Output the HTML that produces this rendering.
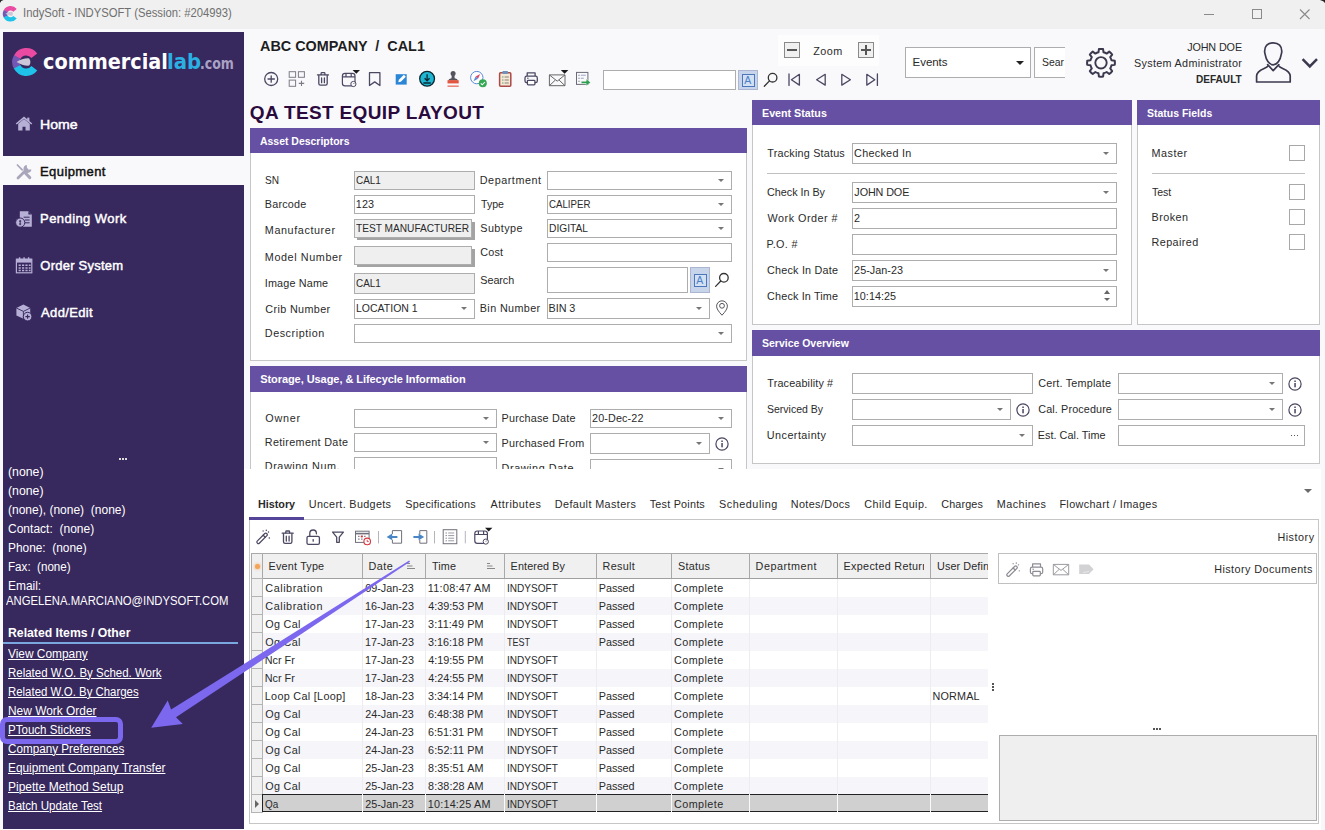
<!DOCTYPE html>
<html lang="en"><head><meta charset="utf-8"><title>IndySoft - INDYSOFT</title>
<style>
html,body{margin:0;padding:0}
body{width:1325px;height:830px;overflow:hidden;background:#f9f9fc;position:relative;font-family:'Liberation Sans',sans-serif}
.a{position:absolute}
.arr{width:0;height:0;border-style:solid;border-width:3.6px 3.7px 0;border-color:transparent}

.t{position:absolute;white-space:pre;line-height:1;transform-origin:0 0;font-family:'Liberation Sans',sans-serif;color:#2a2a2a}
</style></head>
<body>
<span class="t" style="left:259.90px;top:38px;font-size:15.5px;font-weight:700;color:#1e1e1e;transform:scaleX(0.928);">ABC COMPANY  /  CAL1</span>
<span class="t" style="left:249.85px;top:103px;font-size:19px;font-weight:700;color:#2b0a3d;letter-spacing:0.35px;">QA TEST EQUIP LAYOUT</span>
<div class="a" style="left:603px;top:70px;width:133px;height:20px;background:#fff;border:1px solid #adadad;box-sizing:border-box;"></div>
<div class="a" style="left:778px;top:35px;width:101px;height:31px;background:#fdfdfe;"></div>
<div class="a" style="left:784px;top:42px;width:16px;height:16px;background:#f0f0f0;border:1px solid #8a8a8a;box-sizing:border-box;"></div>
<div class="a" style="left:858px;top:42px;width:16px;height:16px;background:#f0f0f0;border:1px solid #8a8a8a;box-sizing:border-box;"></div>
<div class="a" style="left:787px;top:49px;width:10px;height:2px;background:#555;"></div>
<div class="a" style="left:861px;top:49px;width:10px;height:2px;background:#555;"></div>
<div class="a" style="left:865px;top:45px;width:2px;height:10px;background:#555;"></div>
<span class="t" style="left:813.35px;top:46px;font-size:10.8px;letter-spacing:0.42px;">Zoom</span>
<div class="a" style="left:905px;top:47px;width:126px;height:31px;background:#fff;border:1px solid #adadad;box-sizing:border-box;"></div>
<span class="t" style="left:912.60px;top:57px;font-size:11.5px;letter-spacing:-0.06px;">Events</span>
<div class="a arr" style="left:1016px;top:61px;border-width:4.5px 4px 0;border-top-color:#222"></div>
<div class="a" style="left:1034px;top:47px;width:31px;height:31px;overflow:hidden"><div style="width:60px;height:31px;box-sizing:border-box;border:1px solid #adadad;background:#fff"></div></div>
<span class="t" style="left:1042.10px;top:57px;font-size:11.5px;transform:scaleX(0.905);">Sear</span>
<span class="t" style="left:1187.15px;top:42px;font-size:10.8px;letter-spacing:-0.12px;">JOHN DOE</span>
<span class="t" style="left:1134.10px;top:58px;font-size:10.8px;letter-spacing:0.30px;">System Administrator</span>
<span class="t" style="left:1195.85px;top:74px;font-size:10.8px;font-weight:700;transform:scaleX(0.933);">DEFAULT</span>
<div class="a" style="left:250px;top:128px;width:497px;height:233px;background:#fff;border:1px solid #c6c6c6;box-sizing:border-box;"></div>
<div class="a" style="left:250px;top:128px;width:497px;height:25px;background:#6650a3;"></div>
<span class="t" style="left:260.15px;top:136px;font-size:11px;font-weight:700;color:#fff;transform:scaleX(0.950);">Asset Descriptors</span>
<span class="t" style="left:265.30px;top:175px;font-size:10.8px;transform:scaleX(0.936);">SN</span>
<span class="t" style="left:264.80px;top:199px;font-size:10.8px;letter-spacing:0.19px;">Barcode</span>
<span class="t" style="left:264.80px;top:225px;font-size:10.8px;letter-spacing:0.60px;">Manufacturer</span>
<span class="t" style="left:264.80px;top:252px;font-size:10.8px;letter-spacing:0.60px;">Model Number</span>
<span class="t" style="left:264.80px;top:278px;font-size:10.8px;letter-spacing:0.16px;">Image Name</span>
<span class="t" style="left:265.30px;top:304px;font-size:10.8px;letter-spacing:0.36px;">Crib Number</span>
<span class="t" style="left:264.80px;top:328px;font-size:10.8px;letter-spacing:0.54px;">Description</span>
<span class="t" style="left:479.80px;top:175px;font-size:10.8px;letter-spacing:0.53px;">Department</span>
<span class="t" style="left:480.55px;top:199px;font-size:10.8px;transform:scaleX(0.980);">Type</span>
<span class="t" style="left:480.30px;top:223px;font-size:10.8px;letter-spacing:0.43px;">Subtype</span>
<span class="t" style="left:480.30px;top:247px;font-size:10.8px;letter-spacing:0.18px;">Cost</span>
<span class="t" style="left:480.30px;top:275px;font-size:10.8px;letter-spacing:-0.06px;">Search</span>
<span class="t" style="left:479.80px;top:303px;font-size:10.8px;letter-spacing:0.37px;">Bin Number</span>
<div class="a" style="left:354px;top:171px;width:121px;height:19px;background:#efefef;border:1px solid #adadad;box-sizing:border-box;"></div>
<span class="t" style="left:356.10px;top:175px;font-size:10.8px;transform:scaleX(0.918);">CAL1</span>
<div class="a" style="left:354px;top:195px;width:121px;height:19px;background:#fff;border:1px solid #adadad;box-sizing:border-box;"></div>
<span class="t" style="left:355.85px;top:199px;font-size:10.8px;letter-spacing:0.12px;">123</span>
<div class="a" style="left:357px;top:222px;width:118px;height:18px;background:#a3a3a3;"></div>
<div class="a" style="left:354px;top:219px;width:118px;height:19px;background:#efefef;border:1px solid #adadad;box-sizing:border-box;"></div>
<span class="t" style="left:356.35px;top:223px;font-size:10.8px;transform:scaleX(0.939);">TEST MANUFACTURER</span>
<div class="a" style="left:357px;top:249px;width:118px;height:18px;background:#a3a3a3;"></div>
<div class="a" style="left:354px;top:246px;width:118px;height:19px;background:#efefef;border:1px solid #adadad;box-sizing:border-box;"></div>
<div class="a" style="left:354px;top:273px;width:121px;height:21px;background:#efefef;border:1px solid #adadad;box-sizing:border-box;"></div>
<span class="t" style="left:356.10px;top:278px;font-size:10.8px;transform:scaleX(0.918);">CAL1</span>
<div class="a" style="left:354px;top:299px;width:121px;height:20px;background:#fff;border:1px solid #adadad;box-sizing:border-box;"></div>
<div class="a arr" style="left:461.3px;top:307.2px;border-top-color:#767676"></div>
<span class="t" style="left:355.85px;top:303px;font-size:10.8px;transform:scaleX(0.972);">LOCATION 1</span>
<div class="a" style="left:354px;top:324px;width:378px;height:19px;background:#fff;border:1px solid #adadad;box-sizing:border-box;"></div>
<div class="a arr" style="left:718.3px;top:331.7px;border-top-color:#767676"></div>
<div class="a" style="left:547px;top:171px;width:185px;height:19px;background:#fff;border:1px solid #adadad;box-sizing:border-box;"></div>
<div class="a arr" style="left:718.3px;top:178.7px;border-top-color:#767676"></div>
<div class="a" style="left:547px;top:195px;width:185px;height:19px;background:#fff;border:1px solid #adadad;box-sizing:border-box;"></div>
<div class="a arr" style="left:718.3px;top:202.7px;border-top-color:#767676"></div>
<span class="t" style="left:549.10px;top:199px;font-size:10.8px;transform:scaleX(0.897);">CALIPER</span>
<div class="a" style="left:547px;top:219px;width:185px;height:19px;background:#fff;border:1px solid #adadad;box-sizing:border-box;"></div>
<div class="a arr" style="left:718.3px;top:226.7px;border-top-color:#767676"></div>
<span class="t" style="left:548.85px;top:223px;font-size:10.8px;transform:scaleX(0.947);">DIGITAL</span>
<div class="a" style="left:547px;top:243px;width:185px;height:19px;background:#fff;border:1px solid #adadad;box-sizing:border-box;"></div>
<div class="a" style="left:547px;top:267px;width:141px;height:26px;background:#fff;border:1px solid #adadad;box-sizing:border-box;"></div>
<div class="a" style="left:547px;top:298px;width:163px;height:21px;background:#fff;border:1px solid #adadad;box-sizing:border-box;"></div>
<div class="a arr" style="left:696.3px;top:306.7px;border-top-color:#767676"></div>
<span class="t" style="left:548.60px;top:303px;font-size:10.8px;letter-spacing:-0.06px;">BIN 3</span>
<div class="a" style="left:250px;top:366px;width:497px;height:103px;overflow:hidden">
<div class="a" style="left:-250px;top:-366px;width:1000px;height:600px">
<div class="a" style="left:250px;top:366px;width:497px;height:154px;background:#fff;border:1px solid #c6c6c6;box-sizing:border-box;"></div>
<div class="a" style="left:250px;top:366px;width:497px;height:26px;background:#6650a3;"></div>
<span class="t" style="left:260.15px;top:374px;font-size:11px;font-weight:700;color:#fff;letter-spacing:-0.06px;">Storage, Usage, &amp; Lifecycle Information</span>
<span class="t" style="left:265.30px;top:413px;font-size:10.8px;letter-spacing:0.76px;">Owner</span>
<span class="t" style="left:264.80px;top:437px;font-size:10.8px;letter-spacing:0.33px;">Retirement Date</span>
<span class="t" style="left:264.80px;top:461px;font-size:10.8px;letter-spacing:0.58px;">Drawing Num.</span>
<span class="t" style="left:501.60px;top:413px;font-size:10.8px;letter-spacing:0.20px;">Purchase Date</span>
<span class="t" style="left:501.60px;top:438px;font-size:10.8px;letter-spacing:0.21px;">Purchased From</span>
<span class="t" style="left:501.60px;top:463px;font-size:10.8px;letter-spacing:0.58px;">Drawing Date</span>
<div class="a" style="left:354px;top:409px;width:143px;height:19px;background:#fff;border:1px solid #adadad;box-sizing:border-box;"></div>
<div class="a arr" style="left:483.3px;top:416.7px;border-top-color:#767676"></div>
<div class="a" style="left:354px;top:433px;width:143px;height:19px;background:#fff;border:1px solid #adadad;box-sizing:border-box;"></div>
<div class="a arr" style="left:483.3px;top:440.7px;border-top-color:#767676"></div>
<div class="a" style="left:354px;top:457px;width:143px;height:19px;background:#fff;border:1px solid #adadad;box-sizing:border-box;"></div>
<div class="a" style="left:590px;top:409px;width:142px;height:19px;background:#fff;border:1px solid #adadad;box-sizing:border-box;"></div>
<div class="a arr" style="left:718.3px;top:416.7px;border-top-color:#767676"></div>
<span class="t" style="left:592.10px;top:413px;font-size:10.8px;letter-spacing:0.12px;">20-Dec-22</span>
<div class="a" style="left:590px;top:433px;width:120px;height:21px;background:#fff;border:1px solid #adadad;box-sizing:border-box;"></div>
<div class="a arr" style="left:696.3px;top:441.7px;border-top-color:#767676"></div>
<div class="a" style="left:590px;top:459px;width:142px;height:21px;background:#fff;border:1px solid #adadad;box-sizing:border-box;"></div>
<div class="a arr" style="left:718.3px;top:467.7px;border-top-color:#767676"></div>
<svg class="a" style="left:714px;top:435.5px" width="16" height="16" viewBox="0 0 16 16"><circle cx="8" cy="8" r="6.1" fill="none" stroke="#4a4560" stroke-width="1.2"/><rect x="7.3" y="7" width="1.5" height="4.3" fill="#4a4560"/><rect x="7.3" y="4.5" width="1.5" height="1.5" fill="#4a4560"/></svg>
</div></div>
<div class="a" style="left:752px;top:100px;width:380px;height:225px;background:#fff;border:1px solid #c6c6c6;box-sizing:border-box;"></div>
<div class="a" style="left:752px;top:100px;width:380px;height:25px;background:#6650a3;"></div>
<span class="t" style="left:761.65px;top:108px;font-size:11px;font-weight:700;color:#fff;transform:scaleX(0.973);">Event Status</span>
<span class="t" style="left:767.35px;top:148px;font-size:10.8px;letter-spacing:0.20px;">Tracking Status</span>
<span class="t" style="left:767.10px;top:187px;font-size:10.8px;letter-spacing:-0.03px;">Check In By</span>
<span class="t" style="left:767.60px;top:213px;font-size:10.8px;letter-spacing:0.49px;">Work Order #</span>
<span class="t" style="left:766.60px;top:239px;font-size:10.8px;letter-spacing:0.32px;">P.O. #</span>
<span class="t" style="left:767.10px;top:265px;font-size:10.8px;letter-spacing:0.20px;">Check In Date</span>
<span class="t" style="left:767.10px;top:291px;font-size:10.8px;letter-spacing:0.16px;">Check In Time</span>
<div class="a" style="left:852px;top:143px;width:265px;height:21px;background:#fff;border:1px solid #adadad;box-sizing:border-box;"></div>
<div class="a arr" style="left:1103.3px;top:151.7px;border-top-color:#767676"></div>
<span class="t" style="left:854.10px;top:148px;font-size:10.8px;letter-spacing:0.28px;">Checked In</span>
<div class="a" style="left:767px;top:173px;width:350px;height:1px;background:#c0c0c0;"></div>
<div class="a" style="left:852px;top:182px;width:265px;height:21px;background:#fff;border:1px solid #adadad;box-sizing:border-box;"></div>
<div class="a arr" style="left:1103.3px;top:190.7px;border-top-color:#767676"></div>
<span class="t" style="left:854.35px;top:187px;font-size:10.8px;letter-spacing:-0.11px;">JOHN DOE</span>
<div class="a" style="left:852px;top:208px;width:265px;height:21px;background:#fff;border:1px solid #adadad;box-sizing:border-box;"></div>
<span class="t" style="left:854.10px;top:213px;font-size:10.8px;">2</span>
<div class="a" style="left:852px;top:234px;width:265px;height:21px;background:#fff;border:1px solid #adadad;box-sizing:border-box;"></div>
<div class="a" style="left:852px;top:260px;width:265px;height:21px;background:#fff;border:1px solid #adadad;box-sizing:border-box;"></div>
<div class="a arr" style="left:1103.3px;top:268.7px;border-top-color:#767676"></div>
<span class="t" style="left:854.10px;top:265px;font-size:10.8px;letter-spacing:0.03px;">25-Jan-23</span>
<div class="a" style="left:852px;top:286px;width:265px;height:21px;background:#fff;border:1px solid #adadad;box-sizing:border-box;"></div>
<span class="t" style="left:853.85px;top:291px;font-size:10.8px;letter-spacing:0.01px;">10:14:25</span>
<div class="a arr" style="left:1103.5px;top:290px;border-width:0 3.5px 4px;border-top-color:transparent;border-bottom-color:#666"></div>
<div class="a arr" style="left:1103.5px;top:298px;border-top-color:#666"></div>
<div class="a" style="left:1137px;top:100px;width:183px;height:225px;background:#fff;border:1px solid #c6c6c6;box-sizing:border-box;"></div>
<div class="a" style="left:1137px;top:100px;width:183px;height:25px;background:#6650a3;"></div>
<span class="t" style="left:1147.15px;top:108px;font-size:11px;font-weight:700;color:#fff;transform:scaleX(0.953);">Status Fields</span>
<span class="t" style="left:1151.60px;top:148px;font-size:10.8px;letter-spacing:0.50px;">Master</span>
<div class="a" style="left:1289px;top:145px;width:16px;height:16px;background:#fff;border:1px solid #a8a8a8;box-sizing:border-box;"></div>
<span class="t" style="left:1152.35px;top:187px;font-size:10.8px;transform:scaleX(0.974);">Test</span>
<div class="a" style="left:1289px;top:184px;width:16px;height:16px;background:#fff;border:1px solid #a8a8a8;box-sizing:border-box;"></div>
<span class="t" style="left:1151.60px;top:212px;font-size:10.8px;letter-spacing:0.44px;">Broken</span>
<div class="a" style="left:1289px;top:209px;width:16px;height:16px;background:#fff;border:1px solid #a8a8a8;box-sizing:border-box;"></div>
<span class="t" style="left:1151.60px;top:237px;font-size:10.8px;letter-spacing:0.39px;">Repaired</span>
<div class="a" style="left:1289px;top:234px;width:16px;height:16px;background:#fff;border:1px solid #a8a8a8;box-sizing:border-box;"></div>
<div class="a" style="left:1152px;top:173px;width:153px;height:1px;background:#c0c0c0;"></div>
<div class="a" style="left:752px;top:330px;width:568px;height:134px;background:#fff;border:1px solid #c6c6c6;box-sizing:border-box;"></div>
<div class="a" style="left:752px;top:330px;width:568px;height:26px;background:#6650a3;"></div>
<span class="t" style="left:762.15px;top:338px;font-size:11px;font-weight:700;color:#fff;transform:scaleX(0.953);">Service Overview</span>
<span class="t" style="left:767.35px;top:378px;font-size:10.8px;letter-spacing:0.15px;">Traceability #</span>
<span class="t" style="left:767.10px;top:404px;font-size:10.8px;transform:scaleX(0.973);">Serviced By</span>
<span class="t" style="left:766.85px;top:430px;font-size:10.8px;letter-spacing:0.45px;">Uncertainty</span>
<span class="t" style="left:1038.30px;top:378px;font-size:10.8px;letter-spacing:0.21px;">Cert. Template</span>
<span class="t" style="left:1038.30px;top:404px;font-size:10.8px;letter-spacing:0.12px;">Cal. Procedure</span>
<span class="t" style="left:1037.80px;top:430px;font-size:10.8px;letter-spacing:0.04px;">Est. Cal. Time</span>
<div class="a" style="left:852px;top:373px;width:181px;height:21px;background:#fff;border:1px solid #adadad;box-sizing:border-box;"></div>
<div class="a" style="left:852px;top:399px;width:159px;height:21px;background:#fff;border:1px solid #adadad;box-sizing:border-box;"></div>
<div class="a arr" style="left:997.3px;top:407.7px;border-top-color:#767676"></div>
<div class="a" style="left:852px;top:425px;width:181px;height:21px;background:#fff;border:1px solid #adadad;box-sizing:border-box;"></div>
<div class="a arr" style="left:1019.3px;top:433.7px;border-top-color:#767676"></div>
<div class="a" style="left:1118px;top:373px;width:165px;height:21px;background:#fff;border:1px solid #adadad;box-sizing:border-box;"></div>
<div class="a arr" style="left:1269.3px;top:381.7px;border-top-color:#767676"></div>
<div class="a" style="left:1118px;top:399px;width:165px;height:21px;background:#fff;border:1px solid #adadad;box-sizing:border-box;"></div>
<div class="a arr" style="left:1269.3px;top:407.7px;border-top-color:#767676"></div>
<div class="a" style="left:1118px;top:425px;width:187px;height:21px;background:#fff;border:1px solid #adadad;box-sizing:border-box;"></div>
<div class="a" style="left:1291px;top:435px;width:1px;height:1px;background:#555;box-shadow:3px 0 #555,6px 0 #555"></div>
<svg class="a" style="left:1015px;top:401.5px" width="16" height="16" viewBox="0 0 16 16"><circle cx="8" cy="8" r="6.1" fill="none" stroke="#4a4560" stroke-width="1.2"/><rect x="7.3" y="7" width="1.5" height="4.3" fill="#4a4560"/><rect x="7.3" y="4.5" width="1.5" height="1.5" fill="#4a4560"/></svg>
<svg class="a" style="left:1286.5px;top:375.5px" width="16" height="16" viewBox="0 0 16 16"><circle cx="8" cy="8" r="6.1" fill="none" stroke="#4a4560" stroke-width="1.2"/><rect x="7.3" y="7" width="1.5" height="4.3" fill="#4a4560"/><rect x="7.3" y="4.5" width="1.5" height="1.5" fill="#4a4560"/></svg>
<svg class="a" style="left:1286.5px;top:401.5px" width="16" height="16" viewBox="0 0 16 16"><circle cx="8" cy="8" r="6.1" fill="none" stroke="#4a4560" stroke-width="1.2"/><rect x="7.3" y="7" width="1.5" height="4.3" fill="#4a4560"/><rect x="7.3" y="4.5" width="1.5" height="1.5" fill="#4a4560"/></svg>
<div class="a" style="left:780px;top:473px;width:2px;height:2px;background:#555;box-shadow:3px 0 #555,6px 0 #555"></div>
<div class="a" style="left:244px;top:469px;width:1081px;height:361px;background:#fff;"></div>
<div class="a" style="left:1321px;top:469px;width:4px;height:361px;background:#f8f8fa;"></div>
<span class="t" style="left:258.05px;top:499px;font-size:10.8px;font-weight:700;letter-spacing:-0.02px;">History</span>
<span class="t" style="left:308.85px;top:499px;font-size:10.8px;letter-spacing:0.34px;">Uncert. Budgets</span>
<span class="t" style="left:405.30px;top:499px;font-size:10.8px;letter-spacing:0.29px;">Specifications</span>
<span class="t" style="left:490.60px;top:499px;font-size:10.8px;letter-spacing:0.51px;">Attributes</span>
<span class="t" style="left:554.80px;top:499px;font-size:10.8px;letter-spacing:0.40px;">Default Masters</span>
<span class="t" style="left:649.75px;top:499px;font-size:10.8px;letter-spacing:0.22px;">Test Points</span>
<span class="t" style="left:719.10px;top:499px;font-size:10.8px;letter-spacing:0.53px;">Scheduling</span>
<span class="t" style="left:790.80px;top:499px;font-size:10.8px;letter-spacing:0.37px;">Notes/Docs</span>
<span class="t" style="left:864.30px;top:499px;font-size:10.8px;letter-spacing:0.44px;">Child Equip.</span>
<span class="t" style="left:941.30px;top:499px;font-size:10.8px;letter-spacing:0.12px;">Charges</span>
<span class="t" style="left:996.80px;top:499px;font-size:10.8px;letter-spacing:0.42px;">Machines</span>
<span class="t" style="left:1059.40px;top:499px;font-size:10.8px;letter-spacing:0.38px;">Flowchart / Images</span>
<div class="a arr" style="left:1304.3px;top:488.800px;border-width:4.4px 4.400px 0;border-top-color:#6a6a6a"></div>
<div class="a" style="left:249px;top:519px;width:1070px;height:305px;border:1px solid #c6c6c6;box-sizing:border-box;"></div>
<div class="a" style="left:249px;top:517px;width:55px;height:3px;background:#54449a;"></div>
<span class="t" style="left:1277.40px;top:532px;font-size:10.8px;letter-spacing:0.51px;">History</span>
<div class="a" style="left:251px;top:553px;width:737px;height:260px;overflow:hidden">
<div class="a" style="left:-251px;top:-553px;width:1200px;height:830px">
<div class="a" style="left:251px;top:553px;width:760px;height:26px;background:#f0f0f0;box-sizing:border-box;border-top:1px solid #a9a9a9;border-bottom:1px solid #a0a0a0;"></div>
<div class="a" style="left:263px;top:579px;width:740px;height:18px;background:#fff;"></div>
<div class="a" style="left:251px;top:578px;width:12px;height:19px;background:#f0f0f0;border:1px solid #b4b4b4;box-sizing:border-box;"></div>
<div class="a" style="left:263px;top:597px;width:740px;height:18px;background:#f5f5fa;"></div>
<div class="a" style="left:251px;top:596px;width:12px;height:19px;background:#f0f0f0;border:1px solid #b4b4b4;box-sizing:border-box;"></div>
<div class="a" style="left:263px;top:615px;width:740px;height:18px;background:#fff;"></div>
<div class="a" style="left:251px;top:614px;width:12px;height:19px;background:#f0f0f0;border:1px solid #b4b4b4;box-sizing:border-box;"></div>
<div class="a" style="left:263px;top:633px;width:740px;height:18px;background:#f5f5fa;"></div>
<div class="a" style="left:251px;top:632px;width:12px;height:19px;background:#f0f0f0;border:1px solid #b4b4b4;box-sizing:border-box;"></div>
<div class="a" style="left:263px;top:651px;width:740px;height:18px;background:#fff;"></div>
<div class="a" style="left:251px;top:650px;width:12px;height:19px;background:#f0f0f0;border:1px solid #b4b4b4;box-sizing:border-box;"></div>
<div class="a" style="left:263px;top:669px;width:740px;height:18px;background:#f5f5fa;"></div>
<div class="a" style="left:251px;top:668px;width:12px;height:19px;background:#f0f0f0;border:1px solid #b4b4b4;box-sizing:border-box;"></div>
<div class="a" style="left:263px;top:687px;width:740px;height:18px;background:#fff;"></div>
<div class="a" style="left:251px;top:686px;width:12px;height:19px;background:#f0f0f0;border:1px solid #b4b4b4;box-sizing:border-box;"></div>
<div class="a" style="left:263px;top:705px;width:740px;height:18px;background:#f5f5fa;"></div>
<div class="a" style="left:251px;top:704px;width:12px;height:19px;background:#f0f0f0;border:1px solid #b4b4b4;box-sizing:border-box;"></div>
<div class="a" style="left:263px;top:723px;width:740px;height:18px;background:#fff;"></div>
<div class="a" style="left:251px;top:722px;width:12px;height:19px;background:#f0f0f0;border:1px solid #b4b4b4;box-sizing:border-box;"></div>
<div class="a" style="left:263px;top:741px;width:740px;height:18px;background:#f5f5fa;"></div>
<div class="a" style="left:251px;top:740px;width:12px;height:19px;background:#f0f0f0;border:1px solid #b4b4b4;box-sizing:border-box;"></div>
<div class="a" style="left:263px;top:759px;width:740px;height:18px;background:#fff;"></div>
<div class="a" style="left:251px;top:758px;width:12px;height:19px;background:#f0f0f0;border:1px solid #b4b4b4;box-sizing:border-box;"></div>
<div class="a" style="left:263px;top:777px;width:740px;height:18px;background:#f5f5fa;"></div>
<div class="a" style="left:251px;top:776px;width:12px;height:19px;background:#f0f0f0;border:1px solid #b4b4b4;box-sizing:border-box;"></div>
<div class="a" style="left:263px;top:795px;width:740px;height:17px;background:#d0d0d0;"></div>
<div class="a" style="left:251px;top:794px;width:12px;height:19px;background:#f0f0f0;border:1px solid #b4b4b4;box-sizing:border-box;"></div>
<div class="a" style="left:262px;top:554px;width:1px;height:24px;background:#a9a9a9;"></div>
<div class="a" style="left:362px;top:579px;width:1px;height:216px;background:#ececf1;"></div>
<div class="a" style="left:362px;top:554px;width:1px;height:24px;background:#a9a9a9;"></div>
<div class="a" style="left:425px;top:579px;width:1px;height:216px;background:#ececf1;"></div>
<div class="a" style="left:425px;top:554px;width:1px;height:24px;background:#a9a9a9;"></div>
<div class="a" style="left:504px;top:579px;width:1px;height:216px;background:#ececf1;"></div>
<div class="a" style="left:504px;top:554px;width:1px;height:24px;background:#a9a9a9;"></div>
<div class="a" style="left:596px;top:579px;width:1px;height:216px;background:#ececf1;"></div>
<div class="a" style="left:596px;top:554px;width:1px;height:24px;background:#a9a9a9;"></div>
<div class="a" style="left:671px;top:579px;width:1px;height:216px;background:#ececf1;"></div>
<div class="a" style="left:671px;top:554px;width:1px;height:24px;background:#a9a9a9;"></div>
<div class="a" style="left:749px;top:579px;width:1px;height:216px;background:#ececf1;"></div>
<div class="a" style="left:749px;top:554px;width:1px;height:24px;background:#a9a9a9;"></div>
<div class="a" style="left:837px;top:579px;width:1px;height:216px;background:#ececf1;"></div>
<div class="a" style="left:837px;top:554px;width:1px;height:24px;background:#a9a9a9;"></div>
<div class="a" style="left:930px;top:579px;width:1px;height:216px;background:#ececf1;"></div>
<div class="a" style="left:930px;top:554px;width:1px;height:24px;background:#a9a9a9;"></div>
<div class="a" style="left:251px;top:553px;width:1px;height:26px;background:#a9a9a9;"></div>
<div class="a" style="left:262px;top:794px;width:741px;height:1px;background:#222;"></div>
<div class="a" style="left:262px;top:811px;width:741px;height:1px;background:#222;"></div>
<div class="a" style="left:262px;top:794px;width:1px;height:18px;background:#222;"></div>
<div class="a" style="left:362px;top:794px;width:1px;height:18px;background:#fafafa;"></div>
<div class="a" style="left:425px;top:794px;width:1px;height:18px;background:#fafafa;"></div>
<div class="a" style="left:504px;top:794px;width:1px;height:18px;background:#fafafa;"></div>
<div class="a" style="left:596px;top:794px;width:1px;height:18px;background:#fafafa;"></div>
<div class="a" style="left:671px;top:794px;width:1px;height:18px;background:#fafafa;"></div>
<div class="a" style="left:749px;top:794px;width:1px;height:18px;background:#fafafa;"></div>
<div class="a" style="left:837px;top:794px;width:1px;height:18px;background:#fafafa;"></div>
<div class="a" style="left:930px;top:794px;width:1px;height:18px;background:#fafafa;"></div>
<span class="t" style="left:268.60px;top:561px;font-size:10.8px;letter-spacing:0.19px;">Event Type</span>
<span class="t" style="left:368.60px;top:561px;font-size:10.8px;letter-spacing:0.48px;">Date</span>
<span class="t" style="left:431.95px;top:561px;font-size:10.8px;letter-spacing:0.13px;">Time</span>
<span class="t" style="left:510.60px;top:561px;font-size:10.8px;letter-spacing:0.11px;">Entered By</span>
<span class="t" style="left:602.60px;top:561px;font-size:10.8px;letter-spacing:0.30px;">Result</span>
<span class="t" style="left:678.10px;top:561px;font-size:10.8px;letter-spacing:0.22px;">Status</span>
<span class="t" style="left:755.60px;top:561px;font-size:10.8px;letter-spacing:0.50px;">Department</span>
<div class="a" style="left:837px;top:554px;width:87px;height:24px;overflow:hidden"><div class="a" style="left:-837px;top:-554px">
<span class="t" style="left:843.60px;top:561px;font-size:10.8px;letter-spacing:0.30px;">Expected Return</span>
</div></div>
<div class="a" style="left:930px;top:554px;width:58px;height:24px;overflow:hidden"><div class="a" style="left:-930px;top:-554px">
<span class="t" style="left:937.05px;top:561px;font-size:10.8px;letter-spacing:0.10px;">User Defined</span>
</div></div>
<span class="t" style="left:265.30px;top:583px;font-size:10.8px;letter-spacing:0.55px;">Calibration</span>
<span class="t" style="left:365.30px;top:583px;font-size:10.8px;letter-spacing:-0.02px;">09-Jan-23</span>
<span class="t" style="left:427.85px;top:583px;font-size:10.8px;letter-spacing:0.28px;">11:08:47 AM</span>
<span class="t" style="left:506.60px;top:583px;font-size:10.8px;transform:scaleX(0.930);">INDYSOFT</span>
<span class="t" style="left:598.80px;top:583px;font-size:10.8px;letter-spacing:-0.05px;">Passed</span>
<span class="t" style="left:674.10px;top:583px;font-size:10.8px;letter-spacing:0.41px;">Complete</span>
<span class="t" style="left:265.30px;top:601px;font-size:10.8px;letter-spacing:0.55px;">Calibration</span>
<span class="t" style="left:365.05px;top:601px;font-size:10.8px;letter-spacing:0.03px;">16-Jan-23</span>
<span class="t" style="left:428.35px;top:601px;font-size:10.8px;letter-spacing:-0.01px;">4:39:53 PM</span>
<span class="t" style="left:506.60px;top:601px;font-size:10.8px;transform:scaleX(0.930);">INDYSOFT</span>
<span class="t" style="left:598.80px;top:601px;font-size:10.8px;letter-spacing:-0.05px;">Passed</span>
<span class="t" style="left:674.10px;top:601px;font-size:10.8px;letter-spacing:0.41px;">Complete</span>
<span class="t" style="left:265.30px;top:619px;font-size:10.8px;letter-spacing:0.30px;">Og Cal</span>
<span class="t" style="left:365.05px;top:619px;font-size:10.8px;letter-spacing:0.03px;">17-Jan-23</span>
<span class="t" style="left:428.10px;top:619px;font-size:10.8px;letter-spacing:0.11px;">3:11:49 PM</span>
<span class="t" style="left:506.60px;top:619px;font-size:10.8px;transform:scaleX(0.930);">INDYSOFT</span>
<span class="t" style="left:598.80px;top:619px;font-size:10.8px;letter-spacing:-0.05px;">Passed</span>
<span class="t" style="left:674.10px;top:619px;font-size:10.8px;letter-spacing:0.41px;">Complete</span>
<span class="t" style="left:265.30px;top:637px;font-size:10.8px;letter-spacing:0.30px;">Og Cal</span>
<span class="t" style="left:365.05px;top:637px;font-size:10.8px;letter-spacing:0.03px;">17-Jan-23</span>
<span class="t" style="left:428.10px;top:637px;font-size:10.8px;">3:16:18 PM</span>
<span class="t" style="left:507.35px;top:637px;font-size:10.8px;transform:scaleX(0.835);">TEST</span>
<span class="t" style="left:598.80px;top:637px;font-size:10.8px;letter-spacing:-0.05px;">Passed</span>
<span class="t" style="left:674.10px;top:637px;font-size:10.8px;letter-spacing:0.41px;">Complete</span>
<span class="t" style="left:264.80px;top:655px;font-size:10.8px;letter-spacing:-0.01px;">Ncr Fr</span>
<span class="t" style="left:365.05px;top:655px;font-size:10.8px;letter-spacing:0.03px;">17-Jan-23</span>
<span class="t" style="left:428.35px;top:655px;font-size:10.8px;letter-spacing:-0.01px;">4:19:55 PM</span>
<span class="t" style="left:506.60px;top:655px;font-size:10.8px;transform:scaleX(0.930);">INDYSOFT</span>
<span class="t" style="left:674.10px;top:655px;font-size:10.8px;letter-spacing:0.41px;">Complete</span>
<span class="t" style="left:264.80px;top:673px;font-size:10.8px;letter-spacing:-0.01px;">Ncr Fr</span>
<span class="t" style="left:365.05px;top:673px;font-size:10.8px;letter-spacing:0.03px;">17-Jan-23</span>
<span class="t" style="left:428.35px;top:673px;font-size:10.8px;letter-spacing:-0.01px;">4:24:55 PM</span>
<span class="t" style="left:506.60px;top:673px;font-size:10.8px;transform:scaleX(0.930);">INDYSOFT</span>
<span class="t" style="left:674.10px;top:673px;font-size:10.8px;letter-spacing:0.41px;">Complete</span>
<span class="t" style="left:264.80px;top:691px;font-size:10.8px;letter-spacing:0.31px;">Loop Cal [Loop]</span>
<span class="t" style="left:365.05px;top:691px;font-size:10.8px;letter-spacing:0.03px;">18-Jan-23</span>
<span class="t" style="left:428.10px;top:691px;font-size:10.8px;">3:34:14 PM</span>
<span class="t" style="left:506.60px;top:691px;font-size:10.8px;transform:scaleX(0.930);">INDYSOFT</span>
<span class="t" style="left:598.80px;top:691px;font-size:10.8px;letter-spacing:-0.05px;">Passed</span>
<span class="t" style="left:674.10px;top:691px;font-size:10.8px;letter-spacing:0.41px;">Complete</span>
<span class="t" style="left:932.60px;top:691px;font-size:10.8px;letter-spacing:0.16px;">NORMAL</span>
<span class="t" style="left:265.30px;top:709px;font-size:10.8px;letter-spacing:0.30px;">Og Cal</span>
<span class="t" style="left:365.30px;top:709px;font-size:10.8px;letter-spacing:-0.02px;">24-Jan-23</span>
<span class="t" style="left:428.10px;top:709px;font-size:10.8px;">6:48:38 PM</span>
<span class="t" style="left:506.60px;top:709px;font-size:10.8px;transform:scaleX(0.930);">INDYSOFT</span>
<span class="t" style="left:598.80px;top:709px;font-size:10.8px;letter-spacing:-0.05px;">Passed</span>
<span class="t" style="left:674.10px;top:709px;font-size:10.8px;letter-spacing:0.41px;">Complete</span>
<span class="t" style="left:265.30px;top:727px;font-size:10.8px;letter-spacing:0.30px;">Og Cal</span>
<span class="t" style="left:365.30px;top:727px;font-size:10.8px;letter-spacing:-0.02px;">24-Jan-23</span>
<span class="t" style="left:428.10px;top:727px;font-size:10.8px;">6:51:31 PM</span>
<span class="t" style="left:506.60px;top:727px;font-size:10.8px;transform:scaleX(0.930);">INDYSOFT</span>
<span class="t" style="left:598.80px;top:727px;font-size:10.8px;letter-spacing:-0.05px;">Passed</span>
<span class="t" style="left:674.10px;top:727px;font-size:10.8px;letter-spacing:0.41px;">Complete</span>
<span class="t" style="left:265.30px;top:745px;font-size:10.8px;letter-spacing:0.30px;">Og Cal</span>
<span class="t" style="left:365.30px;top:745px;font-size:10.8px;letter-spacing:-0.02px;">24-Jan-23</span>
<span class="t" style="left:428.10px;top:745px;font-size:10.8px;letter-spacing:0.11px;">6:52:11 PM</span>
<span class="t" style="left:506.60px;top:745px;font-size:10.8px;transform:scaleX(0.930);">INDYSOFT</span>
<span class="t" style="left:598.80px;top:745px;font-size:10.8px;letter-spacing:-0.05px;">Passed</span>
<span class="t" style="left:674.10px;top:745px;font-size:10.8px;letter-spacing:0.41px;">Complete</span>
<span class="t" style="left:265.30px;top:763px;font-size:10.8px;letter-spacing:0.30px;">Og Cal</span>
<span class="t" style="left:365.30px;top:763px;font-size:10.8px;letter-spacing:-0.02px;">25-Jan-23</span>
<span class="t" style="left:428.10px;top:763px;font-size:10.8px;letter-spacing:0.08px;">8:35:51 AM</span>
<span class="t" style="left:506.60px;top:763px;font-size:10.8px;transform:scaleX(0.930);">INDYSOFT</span>
<span class="t" style="left:598.80px;top:763px;font-size:10.8px;letter-spacing:-0.05px;">Passed</span>
<span class="t" style="left:674.10px;top:763px;font-size:10.8px;letter-spacing:0.41px;">Complete</span>
<span class="t" style="left:265.30px;top:781px;font-size:10.8px;letter-spacing:0.30px;">Og Cal</span>
<span class="t" style="left:365.30px;top:781px;font-size:10.8px;letter-spacing:-0.02px;">25-Jan-23</span>
<span class="t" style="left:428.10px;top:781px;font-size:10.8px;letter-spacing:0.08px;">8:38:28 AM</span>
<span class="t" style="left:506.60px;top:781px;font-size:10.8px;transform:scaleX(0.930);">INDYSOFT</span>
<span class="t" style="left:598.80px;top:781px;font-size:10.8px;letter-spacing:-0.05px;">Passed</span>
<span class="t" style="left:674.10px;top:781px;font-size:10.8px;letter-spacing:0.41px;">Complete</span>
<span class="t" style="left:265.30px;top:799px;font-size:10.8px;transform:scaleX(0.919);">Qa</span>
<span class="t" style="left:365.30px;top:799px;font-size:10.8px;letter-spacing:-0.02px;">25-Jan-23</span>
<span class="t" style="left:427.85px;top:799px;font-size:10.8px;letter-spacing:0.20px;">10:14:25 AM</span>
<span class="t" style="left:506.60px;top:799px;font-size:10.8px;transform:scaleX(0.930);">INDYSOFT</span>
<span class="t" style="left:674.10px;top:799px;font-size:10.8px;letter-spacing:0.41px;">Complete</span>
</div></div>
<div class="a" style="left:255px;top:799.500px;width:0;height:0;border-style:solid;border-width:4px 0 4px 4.500px;border-color:transparent transparent transparent #666"></div>
<div class="a" style="left:254.5px;top:563.500px;width:5px;height:5px;border-radius:50%;background:#f2a458;box-shadow:0 0 2px 1px rgba(242,164,88,.4)"></div>
<svg class="a" style="left:407px;top:562px" width="9" height="8" viewBox="0 0 9 8"><path d="M0 1.5h3M0 4h5.5M0 6.5h8" stroke="#888" stroke-width="1" fill="none"/></svg>
<svg class="a" style="left:486.5px;top:562px" width="9" height="8" viewBox="0 0 9 8"><path d="M0 1.5h3M0 4h5.5M0 6.5h8" stroke="#888" stroke-width="1" fill="none"/></svg>
<div class="a" style="left:992px;top:683px;width:2px;height:2px;background:#555;box-shadow:0 3px #555,0 6px #555"></div>
<div class="a" style="left:998px;top:553px;width:319px;height:31px;background:#fff;border:1px solid #c0c0c0;box-sizing:border-box;"></div>
<span class="t" style="left:1214.20px;top:564px;font-size:10.8px;letter-spacing:0.44px;">History Documents</span>
<div class="a" style="left:1153px;top:728px;width:2px;height:2px;background:#555;box-shadow:3px 0 #555,6px 0 #555"></div>
<div class="a" style="left:999px;top:735px;width:318px;height:86px;background:#efefef;border:1px solid #adadad;box-sizing:border-box;"></div>
<div class="a" style="left:0px;top:0px;width:1325px;height:29px;background:#f0f0f0;"></div>
<span class="t" style="left:22.60px;top:7px;font-size:12px;color:#6f6f6f;transform:scaleX(0.938);">IndySoft - INDYSOFT (Session: #204993)</span>
<svg class="a" style="left:1200px;top:5px" width="120" height="20" viewBox="0 0 120 20"><path d="M4 9.5h10" stroke="#8a8a8a" stroke-width="1" fill="none"/><rect x="52.5" y="4.5" width="9" height="9" stroke="#8a8a8a" stroke-width="1" fill="none"/><path d="M100 4.5l9.5 9.5M109.5 4.5l-9.5 9.5" stroke="#8a8a8a" stroke-width="1.1" fill="none"/></svg>
<svg class="a" style="left:1319px;top:0" width="6" height="3" viewBox="0 0 6 3"><path d="M1 0h5v3Q5 .8 1 0z" fill="#222"/></svg>
<svg class="a" style="left:0;top:0" width="4" height="3" viewBox="0 0 4 3"><path d="M0 0h3.500Q.8 .6 0 3z" fill="#222"/></svg>
<div class="a" style="left:3px;top:32px;width:241px;height:797px;background:#37285d;"></div>
<div class="a" style="left:0px;top:156px;width:245px;height:29px;background:#f9f9fc;"></div>
<span class="t" style="left:39.80px;top:118px;font-size:13px;-webkit-text-stroke:0.45px;color:#ffffff;transform:scaleX(1.084);">Home</span>
<span class="t" style="left:40.05px;top:165px;font-size:13px;-webkit-text-stroke:0.45px;color:#111;letter-spacing:0.40px;">Equipment</span>
<span class="t" style="left:40.05px;top:212px;font-size:13px;-webkit-text-stroke:0.45px;color:#ffffff;letter-spacing:0.43px;">Pending Work</span>
<span class="t" style="left:40.30px;top:259px;font-size:13px;-webkit-text-stroke:0.45px;color:#ffffff;letter-spacing:0.24px;">Order System</span>
<span class="t" style="left:41.05px;top:306px;font-size:13px;-webkit-text-stroke:0.45px;color:#ffffff;letter-spacing:0.36px;">Add/Edit</span>
<span class="t" style="left:43.05px;top:52px;font-size:21px;font-weight:700;font-family:'DejaVu Sans','Liberation Sans',sans-serif;color:#fff;transform:scaleX(0.917);">commercial</span>
<span class="t" style="left:167.25px;top:52px;font-size:21px;font-weight:700;font-family:'DejaVu Sans','Liberation Sans',sans-serif;color:#2ab0e2;transform:scaleX(0.937);">lab</span>
<span class="t" style="left:200.15px;top:56px;font-size:16px;font-weight:700;font-family:'DejaVu Sans','Liberation Sans',sans-serif;color:#aaa2c4;transform:scaleX(0.784);">.com</span>
<div class="a" style="left:119px;top:458px;width:2px;height:2px;background:#ddd;box-shadow:3px 0 #ddd,6px 0 #ddd"></div>
<span class="t" style="left:7.85px;top:466px;font-size:12.5px;color:#fff;transform:scaleX(0.983);">(none)</span>
<span class="t" style="left:7.85px;top:485px;font-size:12.5px;color:#fff;transform:scaleX(0.983);">(none)</span>
<span class="t" style="left:7.85px;top:504px;font-size:12.5px;color:#fff;transform:scaleX(0.961);">(none), (none)  (none)</span>
<span class="t" style="left:8.10px;top:523px;font-size:12.5px;color:#fff;transform:scaleX(0.962);">Contact:  (none)</span>
<span class="t" style="left:7.60px;top:542px;font-size:12.5px;color:#fff;transform:scaleX(0.951);">Phone:  (none)</span>
<span class="t" style="left:7.60px;top:561px;font-size:12.5px;color:#fff;transform:scaleX(0.930);">Fax:  (none)</span>
<span class="t" style="left:7.60px;top:580px;font-size:12.5px;color:#fff;transform:scaleX(0.954);">Email:</span>
<span class="t" style="left:5.60px;top:595px;font-size:12.5px;color:#fff;transform:scaleX(0.904);">ANGELENA.MARCIANO@INDYSOFT.COM</span>
<span class="t" style="left:7.85px;top:627px;font-size:12.5px;font-weight:700;color:#fff;transform:scaleX(0.979);">Related Items / Other</span>
<div class="a" style="left:3px;top:642px;width:235px;height:2px;background:#7aa7e0;"></div>
<span class="t" style="left:8.35px;top:648px;font-size:12.5px;color:#fff;text-decoration:underline;text-decoration-thickness:1px;text-underline-offset:1px;transform:scaleX(0.951);">View Company</span>
<span class="t" style="left:7.60px;top:667px;font-size:12.5px;color:#fff;text-decoration:underline;text-decoration-thickness:1px;text-underline-offset:1px;transform:scaleX(0.918);">Related W.O. By Sched. Work</span>
<span class="t" style="left:7.60px;top:686px;font-size:12.5px;color:#fff;text-decoration:underline;text-decoration-thickness:1px;text-underline-offset:1px;transform:scaleX(0.913);">Related W.O. By Charges</span>
<span class="t" style="left:7.60px;top:705px;font-size:12.5px;color:#fff;text-decoration:underline;text-decoration-thickness:1px;text-underline-offset:1px;transform:scaleX(0.953);">New Work Order</span>
<span class="t" style="left:7.60px;top:724px;font-size:12.5px;color:#fff;text-decoration:underline;text-decoration-thickness:1px;text-underline-offset:1px;transform:scaleX(0.923);">PTouch Stickers</span>
<span class="t" style="left:8.10px;top:743px;font-size:12.5px;color:#fff;text-decoration:underline;text-decoration-thickness:1px;text-underline-offset:1px;transform:scaleX(0.935);">Company Preferences</span>
<span class="t" style="left:7.60px;top:762px;font-size:12.5px;color:#fff;text-decoration:underline;text-decoration-thickness:1px;text-underline-offset:1px;transform:scaleX(0.948);">Equipment Company Transfer</span>
<span class="t" style="left:7.60px;top:781px;font-size:12.5px;color:#fff;text-decoration:underline;text-decoration-thickness:1px;text-underline-offset:1px;transform:scaleX(0.960);">Pipette Method Setup</span>
<span class="t" style="left:7.60px;top:800px;font-size:12.5px;color:#fff;text-decoration:underline;text-decoration-thickness:1px;text-underline-offset:1px;transform:scaleX(0.923);">Batch Update Test</span>
<div class="a" style="left:0;top:717px;width:113px;height:17px;border:5px solid #7b68ee;border-radius:7px"></div>
<svg class="a" style="left:262px;top:68px" width="620" height="22" viewBox="262 68 620 22" fill="none" ><g stroke="#4b4862" stroke-width="1.3" stroke-linecap="round"><circle cx="271.2" cy="79" r="6.5"/><path d="M268 79h6.4M271.2 75.8v6.4"/></g><g stroke="#7c7c86" stroke-width="1"><rect x="289.2" y="71.7" width="6.4" height="5.6"/><rect x="298.4" y="71.7" width="6" height="5.6"/><rect x="289.2" y="80.1" width="6.4" height="6.2"/><path d="M298.8 83.4h5.4M301.5 80.7v5.4" stroke-width="1.1"/></g><g stroke="#4b4862" stroke-width="1.3" stroke-linecap="round" stroke-linejoin="round"><path d="M317.5 74.89999999999999h11"/><path d="M321.1 74.7v-1.2q0-.8 .8-.8h2.2q.8 0 .8 .8v1.2"/><path d="M318.8 75.3v8.2q0 1.6 1.6 1.6h5.2q1.6 0 1.6-1.6v-8.2"/><path d="M321.6 77.89999999999999v4.8M324.4 77.89999999999999v4.8"/></g><g stroke="#4b4862" stroke-width="1.2" stroke-linejoin="round"><rect x="342.40000000000003" y="73.39999999999999" width="12.6" height="12.4" rx="2.6"/><path d="M342.40000000000003 76.89999999999999h12.6M346.0 73.39999999999999v3.3M351.2 73.39999999999999v3.3"/><circle cx="353.40000000000003" cy="84.0" r="2.6" fill="#fff" stroke-width="1"/><path d="M353.40000000000003 84.1l1-1.2" stroke-width=".8"/></g><path d="M352.6 70.1h7.400l-3.700 3.700z" fill="#1a1a1a"/><path d="M369.5 72.7h10.4v12.8l-5.2-3.6l-5.2 3.6z" stroke="#4b4862" stroke-width="1.3" stroke-linejoin="round"/><rect x="395.700" y="74.200" width="11" height="10.400" fill="#2b86d6"/><path d="M398.300 82.300l.6-2.500l5-5l1.900 1.900l-5 5z" fill="#fff"/><circle cx="427.1" cy="78.8" r="7.4" fill="#1fb6d2" stroke="#0d2833" stroke-width="1.3"/><path d="M427.1 74.3v6M424.6 78.2l2.5 2.6l2.5-2.6M423.4 83h7.4" stroke="#0d2833" stroke-width="1.3"/><circle cx="453.1" cy="73.6" r="2.5" fill="#55545c"/><path d="M451.9 74h2.4l.4 4.2q2.6 .5 3.4 2.2h-10q.8-1.7 3.4-2.2z" fill="#55545c"/><rect x="447.5" y="80.2" width="11.2" height="3.2" fill="#e4553f"/><rect x="447.5" y="85.6" width="11.2" height="1.1" fill="#e4553f"/><circle cx="476.8" cy="77.6" r="6.2" fill="#fff" stroke="#5b8ad6" stroke-width="1"/><path d="M480.2 74l-2.2 4.8l-2.4-2.4z" fill="#e0486a"/><path d="M473.4 81.2l2.2-4.8l2.4 2.4z" fill="#5b8ad6"/><circle cx="482.8" cy="83.2" r="4" fill="#34a853"/><path d="M480.8 83.3l1.5 1.5l2.6-2.8" stroke="#fff" stroke-width="1.1"/><rect x="499.6" y="72.8" width="11.2" height="13.4" rx="1" fill="#f4e9d6" stroke="#ab4a48" stroke-width="1.5"/><rect x="502.4" y="70.9" width="5.6" height="3" rx=".8" fill="#6f93b8"/><path d="M502.2 77h1.2M502.2 80h1.2M502.2 83h1.2" stroke="#3c8c5a" stroke-width="1.2"/><path d="M504.6 77h4.2M504.6 80h4.2M504.6 83h4.2" stroke="#8a8076" stroke-width="1"/><g stroke="#4b4862" stroke-width="1.3" stroke-linejoin="round"><path d="M527.1999999999999 76.10000000000001v-3.2h7.9v3.2"/><rect x="525.0" y="76.10000000000001" width="12.3" height="6.6" rx="1.8"/><rect x="527.4" y="80.3" width="7.5" height="4.6" rx=".8" fill="#fff"/><path d="M527.0 78.2h1.6" stroke-width="1"/></g><g stroke="#666" stroke-width="1" stroke-linejoin="round"><rect x="549.4" y="74.9" width="15.6" height="10.8"/><path d="M549.4 74.9l7.8 6.264l7.8 -6.264M549.4 85.7l5.928 -5.6160000000000005M565.0 85.7l-5.928 -5.6160000000000005"/></g><path d="M560.8 70h7.6l-3.8 3.8z" fill="#1a1a1a"/><rect x="576.5" y="72.4" width="11.4" height="12" stroke="#6a6a78" stroke-width="1"/><path d="M578.4 75.2h1.2M578.4 78.2h1.2M578.4 81.2h1.2" stroke="#6a6a78" stroke-width="1.1"/><path d="M580.8 75.2h5M580.8 78.2h3" stroke="#9aa8c4" stroke-width="1.1"/><path d="M581.2 81.2h5v-2.4l4.4 3.6l-4.4 3.6v-2.4h-5z" fill="#2f9e50" stroke="#fff" stroke-width=".5"/><g stroke="#333" stroke-width="1.3" stroke-linecap="round"><circle cx="772.6" cy="77.7" r="4.3"/><path d="M769.5 80.9l-5.2 5.4"/></g><g stroke="#4b4862" stroke-width="1.3" stroke-linejoin="round" stroke-linecap="round"><path d="M789 74v11.4M799.4 74.3l-8 5.4l8 5.4z"/><path d="M825.2 74.3l-8.6 5.4l8.6 5.4z"/><path d="M841.8 74.3l8.6 5.4l-8.6 5.4z"/><path d="M866.8 74.3l8 5.4l-8 5.4zM877.4 74v11.4"/></g></svg>
<div class="a" style="left:738px;top:70px;width:20px;height:20px;background:#c8d4ea;border:1px solid #aab6d2;box-sizing:border-box;"></div>
<div class="a" style="left:741.5px;top:73.5px;width:13px;height:13px;background:#d3dff3;border:1px solid #4a78ba;box-sizing:border-box;"></div>
<span class="t" style="left:744.20px;top:75px;font-size:10.5px;color:#4a80c8;">A</span>
<div class="a" style="left:690px;top:267px;width:20px;height:26px;background:#c8d4ea;border:1px solid #aab6d2;box-sizing:border-box;"></div>
<div class="a" style="left:693.5px;top:273.5px;width:13px;height:13px;background:#d3dff3;border:1px solid #4a78ba;box-sizing:border-box;"></div>
<span class="t" style="left:696.20px;top:275px;font-size:10.5px;color:#4a80c8;">A</span>
<svg class="a" style="left:712px;top:270px" width="20" height="50" viewBox="712 270 20 50" fill="none" ><g stroke="#333" stroke-width="1.3" stroke-linecap="round"><circle cx="723.9" cy="277.8" r="4.3"/><path d="M720.8 281.0l-5.2 5.4"/></g><path d="M722 315.2q-5.4-5.6-5.4-9a5.4 5.4 0 0 1 10.8 0q0 3.4-5.4 9z" stroke="#55545c" stroke-width="1"/><circle cx="722" cy="305.800" r="2.400" stroke="#55545c" stroke-width="1"/></svg>
<svg class="a" style="left:1083px;top:45px" width="36" height="36" viewBox="1083 45 36 36" fill="none" ><path d="M1098.48 52.30L1098.93 49.05A13.9 13.9 0 0 1 1103.07 49.05L1103.52 52.30A10.8 10.8 0 0 1 1106.64 53.59L1106.64 53.59L1109.26 51.62A13.9 13.9 0 0 1 1112.18 54.54L1110.21 57.16A10.8 10.8 0 0 1 1111.50 60.28L1111.50 60.28L1114.75 60.73A13.9 13.9 0 0 1 1114.75 64.87L1111.50 65.32A10.8 10.8 0 0 1 1110.21 68.44L1110.21 68.44L1112.18 71.06A13.9 13.9 0 0 1 1109.26 73.98L1106.64 72.01A10.8 10.8 0 0 1 1103.52 73.30L1103.52 73.30L1103.07 76.55A13.9 13.9 0 0 1 1098.93 76.55L1098.48 73.30A10.8 10.8 0 0 1 1095.36 72.01L1095.36 72.01L1092.74 73.98A13.9 13.9 0 0 1 1089.82 71.06L1091.79 68.44A10.8 10.8 0 0 1 1090.50 65.32L1090.50 65.32L1087.25 64.87A13.9 13.9 0 0 1 1087.25 60.73L1090.50 60.28A10.8 10.8 0 0 1 1091.79 57.16L1091.79 57.16L1089.82 54.54A13.9 13.9 0 0 1 1092.74 51.62L1095.36 53.59A10.8 10.8 0 0 1 1098.48 52.30Z" stroke="#3b394d" stroke-width="2" stroke-linejoin="round"/><circle cx="1101" cy="62.800" r="5.700" stroke="#3b394d" stroke-width="1.900"/></svg>
<svg class="a" style="left:1252px;top:38px" width="70" height="48" viewBox="1252 38 70 48" fill="none" ><g stroke="#3b394d" stroke-width="1.7" stroke-linejoin="round" stroke-linecap="round"><path d="M1273.2 42.8c5.6 0 8.6 3.6 8.6 8.4c0 1.6-.4 2.6-.8 4.2c-.6 4-3.4 9.400-7.800 9.400s-7.200-5.400-7.800-9.400c-.4-1.600-.8-2.600-.8-4.200c0-4.800 3-8.400 8.600-8.400z"/><path d="M1267.600 64.600l5.600 6l5.600-6"/><path d="M1267.800 66.200c-1 2.400-11.200 3.400-11.200 9.800v6h33.600v-6c0-6.400-10.200-7.400-11.200-9.800"/></g><path d="M1302.600 59.200l7.200 7.200l7.200-7.200" stroke="#3b394d" stroke-width="2.5"/></svg>
<svg class="a" style="left:252px;top:524px" width="244" height="24" viewBox="252 524 244 24" fill="none" ><g stroke="#4b4862" stroke-width="1.25" stroke-linecap="round" stroke-linejoin="round"><path d="M257.2 541.0999999999999l7.6-7.6q.9-.9 1.8 0l.3 .3q.9 .9 0 1.8l-7.6 7.6q-.9 .9-1.8 0l-.3-.3q-.9-.9 0-1.8z"/><path d="M263.2 535.1999999999999l2 2"/><path d="M263.1 530.8v.2M266.3 530.1999999999999v.2M268.4 532.0h.2M269.2 538.0h.2" stroke-width="1.3"/></g><g stroke="#4b4862" stroke-width="1.3" stroke-linecap="round" stroke-linejoin="round"><path d="M282.2 533.2h11"/><path d="M285.8 533.0v-1.2q0-.8 .8-.8h2.2q.8 0 .8 .8v1.2"/><path d="M283.5 533.6v8.2q0 1.6 1.6 1.6h5.2q1.6 0 1.6-1.6v-8.2"/><path d="M286.3 536.2v4.8M289.09999999999997 536.2v4.8"/></g><g stroke="#4b4862" stroke-width="1.3" stroke-linejoin="round" stroke-linecap="round"><rect x="307" y="536.4" width="12.400" height="8" rx="1.4"/><path d="M309.800 536.200v-3q0-3.200 3.300-3.200q3.300 0 3.300 3.200v.6"/><path d="M313.200 539.600v1.600"/></g><path d="M332.600 532.100h10.800l-4.100 5v5.200h-2.600v-5.200z" stroke="#4b4862" stroke-width="1.3" stroke-linejoin="round"/><rect x="355.500" y="531.200" width="13.600" height="11.200" stroke="#70707c" stroke-width="1"/><path d="M355.500 533.600h13.600" stroke="#70707c" stroke-width="1.600"/><path d="M358 536.400h1.600M361 536.400h1.600M364 536.400h1.600M358 539.200h1.600M361 539.200h1.600" stroke="#8a8a96" stroke-width="1.300"/><rect x="360.800" y="535.600" width="2" height="1.800" fill="#d9363e"/><circle cx="367.200" cy="541.400" r="3.300" fill="#fff" stroke="#d9363e" stroke-width="1.100"/><path d="M367.200 539.800v1.800h1.500" stroke="#d9363e" stroke-width=".9"/><path d="M378.500 531v12.400M434.500 531v12.400M465.300 531v12.400" stroke="#b4b4bc" stroke-width="1"/><path d="M392.400 534v-3.400h9.200v12.600h-9.200v-3.400" stroke="#70707c" stroke-width="1"/><path d="M397.400 535.900h-5.200v-2.300l-5.600 3.300l5.600 3.300v-2.300h5.200z" fill="#4a86c5"/><path d="M419.800 534v-3.400h7v12.600h-7v-3.400" stroke="#70707c" stroke-width="1"/><path d="M413.400 535.900h5.200v-2.300l5.600 3.300l-5.600 3.300v-2.300h-5.200z" fill="#4a86c5"/><rect x="443.200" y="529.700" width="13.600" height="14" stroke="#70707c" stroke-width="1"/><path d="M445.600 533h1.200M445.600 535.600h1.200M445.600 538.200h1.200M445.600 540.800h1.200" stroke="#70707c" stroke-width="1"/><path d="M448.200 533h6M448.200 535.600h6M448.200 538.200h6M448.200 540.800h6" stroke="#9a9aa6" stroke-width="1"/><g stroke="#4b4862" stroke-width="1.2" stroke-linejoin="round"><rect x="474.8" y="531.0" width="12.6" height="12.4" rx="2.6"/><path d="M474.8 534.5h12.6M478.4 531.0v3.3M483.59999999999997 531.0v3.3"/><circle cx="485.8" cy="541.6" r="2.6" fill="#fff" stroke-width="1"/><path d="M485.8 541.7l1-1.2" stroke-width=".8"/></g><path d="M485.0 527.7h7.400l-3.700 3.700z" fill="#1a1a1a"/></svg>
<svg class="a" style="left:1002px;top:558.7px" width="96" height="22" viewBox="1002 558 96 22" fill="none" ><g stroke="#8c8c94" stroke-width="1.25" stroke-linecap="round" stroke-linejoin="round"><path d="M1007.2 572.9l7.6-7.6q.9-.9 1.8 0l.3 .3q.9 .9 0 1.8l-7.6 7.6q-.9 .9-1.8 0l-.3-.3q-.9-.9 0-1.8z"/><path d="M1013.2 567.0l2 2"/><path d="M1013.1 562.6v.2M1016.3 562.0v.2M1018.4 563.8000000000001h.2M1019.2 569.8000000000001h.2" stroke-width="1.3"/></g><g stroke="#8c8c94" stroke-width="1.2" stroke-linejoin="round"><path d="M1032.6 566.1v-3.2h7.9v3.2"/><rect x="1030.3999999999999" y="566.1" width="12.3" height="6.6" rx="1.8"/><rect x="1032.8" y="570.3000000000001" width="7.5" height="4.6" rx=".8" fill="#fff"/><path d="M1032.3999999999999 568.2h1.6" stroke-width="1"/></g><g stroke="#9a9aa0" stroke-width="1" stroke-linejoin="round"><rect x="1053.3" y="563.4" width="15.4" height="10.4"/><path d="M1053.3 563.4l7.7 6.032l7.7 -6.032M1053.3 573.8l5.852 -5.408M1068.7 573.8l-5.852 -5.408"/></g><path d="M1079.200 563.400h9.800l4.600 4.800l-4.600 4.800h-9.800z" fill="#d2d2d4"/><path d="M1083 571.600l6-1.200" stroke="#e8e8ea" stroke-width="1"/></svg>
<svg class="a" style="left:9px;top:45px" width="32" height="34" viewBox="9 45 32 34" fill="none" ><g fill="none" stroke-width="7.4"><path d="M34.32 55.66A10.3 10.3 0 0 0 17.11 57.16" stroke="#ea4aa2"/><path d="M17.28 56.85A10.3 10.3 0 0 0 17.28 67.15" stroke="#7258b4"/><path d="M17.11 66.84A10.3 10.3 0 0 0 34.32 68.34" stroke="#1fc3ea"/></g><path d="M16.6 62q6.0 -4.0 12.6 -3.6q2.4 3.6 0 7.2q-6.6 0.4 -12.6 -3.6z" fill="#cbc6d8"/></svg>
<svg class="a" style="left:1px;top:4px" width="20" height="20" viewBox="1 4 20 20" fill="none" ><g fill="none" stroke-width="4.4"><path d="M15.01 10.35A5.6 5.6 0 0 0 5.66 11.17" stroke="#ea4aa2"/><path d="M5.75 11.00A5.6 5.6 0 0 0 5.75 16.60" stroke="#7258b4"/><path d="M5.66 16.43A5.6 5.6 0 0 0 15.01 17.25" stroke="#1fc3ea"/></g><path d="M5.380582524271845 13.8q3.262135922330097 -2.174757281553398 6.850485436893203 -1.9572815533980583q1.3048543689320387 1.9572815533980583 0 3.9145631067961166q-3.5883495145631064 0.2174757281553398 -6.850485436893203 -1.9572815533980583z" fill="#cbc6d8"/></svg>
<svg class="a" style="left:12px;top:114px" width="24" height="210" viewBox="12 114 24 210" fill="none" ><path d="M16.200 124l7.800-6.400l7.800 6.400" stroke="#b7b0d6" stroke-width="1.600"/><path d="M18.200 123.800l5.800-4.700l5.800 4.700v6.600h-4.300v-3.600h-3v3.600h-4.300z" fill="#b7b0d6"/><rect x="27.200" y="117.600" width="2.200" height="3.600" fill="#b7b0d6"/><path d="M18 178l8.600-8.600" stroke="#a9a6bb" stroke-width="2.800" stroke-linecap="round"/><path d="M26.200 165.600a3.500 3.500 0 1 0 4.600 4.400l-2.600 .2l-1.800-1.800z" fill="#a9a6bb" stroke="#a9a6bb" stroke-width="1.200" stroke-linejoin="round"/><path d="M17.400 165l4.800 4.800" stroke="#a9a6bb" stroke-width="1.700" stroke-linecap="round"/><path d="M24.400 172l5.400 5.600" stroke="#a9a6bb" stroke-width="3" stroke-linecap="round"/><path d="M19.800 211.200h8.600l3.400 3.400v12.200h-12z" fill="#b7b0d6"/><path d="M28.400 211.200v3.400h3.400z" fill="#37285d"/><path d="M23.600 217.200h6M24.800 220h4.800M24.800 222.800h4.800" stroke="#37285d" stroke-width="1"/><circle cx="20.200" cy="222.600" r="4.600" fill="#b7b0d6" stroke="#37285d" stroke-width="1"/><path d="M20.200 220v5.200M19 221.200h2.200M19 224h2.200" stroke="#37285d" stroke-width=".9"/><rect x="16.400" y="259.200" width="15.400" height="13.600" fill="none" stroke="#b7b0d6" stroke-width="1.200"/><rect x="16.400" y="258.800" width="15.400" height="3.800" fill="#b7b0d6"/><path d="M19.600 257.200v2.400M24.100 257.200v2.400M28.600 257.200v2.400" stroke="#b7b0d6" stroke-width="1.400"/><path d="M18.600 265.200h2.200M22 265.200h2.200M25.400 265.200h2.200M28.800 265.200h1.800M18.600 267.900h2.200M22 267.900h2.200M25.400 267.900h2.200M28.800 267.900h1.800M18.600 270.600h2.200M22 270.600h2.200M25.400 270.600h2.200M28.800 270.600h1.800" stroke="#b7b0d6" stroke-width="1.500"/><path d="M16.400 308l7-3.400l6.800 3.400v7.400l-6.800 3.400l-7-3.400z" fill="#b7b0d6"/><path d="M16.400 308l7 3.400l6.800-3.400M23.400 311.400v7.400" stroke="#37285d" stroke-width=".9"/><circle cx="27.600" cy="316.600" r="4.300" fill="#b7b0d6" stroke="#37285d" stroke-width="1"/><path d="M25.400 316.600h4.400M27.600 314.400v4.400" stroke="#37285d" stroke-width="1.100"/></svg>
<svg class="a" style="left:140px;top:550px" width="280" height="190" viewBox="140 550 280 190"><path d="M409.2 560.6 L171.1 709.5 L167.7 700.5 L151.2 727.8 L182.8 724.1 L176.0 717.3 L410.0 561.8Z" fill="#7b68ee"/></svg>
</body></html>
